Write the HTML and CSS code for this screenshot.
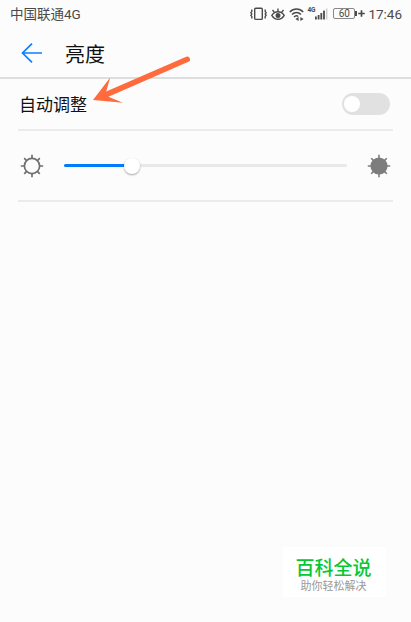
FILE: index.html
```html
<!DOCTYPE html>
<html lang="zh-CN">
<head>
    <meta charset="UTF-8">
    <meta name="viewport" content="width=device-width, initial-scale=1.0">
    <title>亮度</title>
    <link rel="stylesheet" href="styles.css">
</head>
<body>
    <div class="screen">
        <div class="status-bar">
            <span class="carrier">中国联通4G</span>
            <div class="status-icons">
                <svg class="icon-vibrate" width="17" height="14" viewBox="0 0 17 14" fill="none" stroke="#4a4a4a" stroke-width="1.4">
                    <rect x="4.7" y="1.2" width="7.6" height="11.2" rx="1"></rect>
                    <path d="M1.8 2.6v2l-.9 1 .9 1.4-.9 1.4.9 1v2M15.2 2.6v2l.9 1-.9 1.4.9 1.4-.9 1v2"></path>
                </svg>
                <svg class="icon-eye" width="14" height="14" viewBox="0 0 14 14" fill="none" stroke="#4a4a4a" stroke-width="1.4">
                    <path d="M.8 8.3C4 3.6 10 3.6 13.2 8.3C10 13.6 4 13.6 .8 8.3z"></path>
                    <circle cx="7" cy="8.5" r="1.8" fill="#4a4a4a"></circle>
                    <path d="M7 1.5v3.2M1.5 3l1.9 2.4M12.5 3l-1.9 2.4"></path>
                </svg>
                <svg class="icon-wifi" width="15" height="14" viewBox="0 0 15 14" fill="none" stroke="#4a4a4a" stroke-width="1.5">
                    <path d="M.8 5C4.6 1 10.4 1 14.2 5M3 7.6c2.7-2.8 6.3-2.8 9 0M5 10.1c1.4-1.5 3.1-1.5 4.3-.6"></path>
                    <path d="M6.4 12l3.2-2v4zM14.6 12l-3.2-2v4z" fill="#4a4a4a" stroke="none"></path>
                </svg>
                <span class="network">4G</span>
                <svg class="icon-signal" width="13" height="12" viewBox="0 0 13 12" fill="#4a4a4a">
                    <rect x="0" y="8.5" width="1.8" height="3"></rect>
                    <rect x="2.7" y="7" width="1.8" height="4.5"></rect>
                    <rect x="5.4" y="5" width="1.8" height="6.5"></rect>
                    <rect x="8.1" y="2.6" width="1.8" height="8.9"></rect>
                    <rect x="10.9" y="0.5" width="1.6" height="11" fill="#cfcfcf"></rect>
                </svg>
                <span class="battery">60</span>
                <svg class="icon-plus" width="7" height="7" viewBox="0 0 7 7" stroke="#4a4a4a" stroke-width="1.7">
                    <path d="M3.5 .2v6.6M.2 3.5h6.6"></path>
                </svg>
            </div>
            <span class="clock">17:46</span>
        </div>

        <div class="title-bar">
            <svg class="icon-back" width="22" height="20" viewBox="0 0 22 20" fill="none" stroke="#0a7fff" stroke-width="1.7">
                <path d="M11 .6L1.5 10l9.5 9.4M1.5 10H21"></path>
            </svg>
            <h1>亮度</h1>
        </div>

        <div class="settings">
            <div class="row auto-row">
                <span class="label">自动调整</span>
                <span class="switch"><span class="switch-thumb"></span></span>
            </div>
            <div class="row slider-row">
                <svg class="icon-sun" width="24" height="24" viewBox="0 0 24 24" fill="none" stroke="#707070" stroke-width="1.7">
                    <circle cx="12" cy="12" r="7.6"></circle>
                    <path d="M12 .8v3.5M12 19.7v3.5M.8 12h3.5M19.7 12h3.5M4.2 4.2l2.4 2.4M17.4 17.4l2.4 2.4M4.2 19.8l2.4-2.4M17.4 6.6l2.4-2.4"></path>
                </svg>
                <div class="slider">
                    <div class="slider-fill" style="width: 24%"></div>
                    <div class="slider-thumb"></div>
                </div>
                <svg class="icon-sun" width="24" height="24" viewBox="0 0 24 24" fill="#7d7d7d" stroke="#7d7d7d" stroke-width="1.6">
                    <circle cx="12" cy="12" r="7.8"></circle>
                    <path d="M12 .8v3.5M12 19.7v3.5M.8 12h3.5M19.7 12h3.5M4.2 4.2l2.4 2.4M17.4 17.4l2.4 2.4M4.2 19.8l2.4-2.4M17.4 6.6l2.4-2.4"></path>
                </svg>
            </div>
        </div>

        <svg class="pointer" width="100" height="52" viewBox="0 0 100 52" fill="#ff6b3d">
            <path d="M1 45L18.2 22.5L14.2 36.5L94.2 1.8A2.7 2.7 0 0 1 96.4 6.8L16.4 41.8L31 47.8z"></path>
        </svg>

        <div class="badge">
            <div class="badge-title">百科全说</div>
            <div class="badge-text">助你轻松解决</div>
        </div>
    </div>
</body>
</html>
```

FILE: styles.css
```css
:root {
    --background: #fcfcfc;
    --primary: #007dff;
    --line: #ebebeb;
    --status: #4a4a4a;
    --green: #06c832;
}

* {
    margin: 0;
    padding: 0;
    box-sizing: border-box;
}

body {
    font-family: Roboto, "Noto Sans CJK SC", sans-serif;
    background: var(--background);
    color: #111;
}

svg {
    display: block;
    flex-shrink: 0;
}

.screen {
    position: relative;
    height: 622px;
    overflow: hidden;
}

.status-bar {
    display: flex;
    align-items: center;
    height: 27px;
    padding: 0 9px 0 10px;
    color: var(--status);
    white-space: nowrap;
}

.carrier {
    font-size: 13.5px;
    line-height: 20px;
    margin-right: auto;
}

.status-icons {
    display: flex;
    align-items: center;
}

.icon-eye {
    margin-left: 4px;
}

.icon-wifi {
    margin-left: 4px;
}

.network {
    width: 8px;
    margin: 0 0 6px 3px;
    font-size: 6.5px;
    font-weight: 700;
    line-height: 7px;
}

.battery {
    position: relative;
    width: 22px;
    height: 11px;
    margin-left: 5px;
    border: 1px solid #888;
    border-radius: 2px;
    font-size: 10px;
    line-height: 10px;
    text-align: center;
}

.battery::after {
    content: "";
    position: absolute;
    top: 2px;
    right: -3px;
    width: 2px;
    height: 5px;
    background: var(--status);
}

.icon-plus {
    margin-left: 3px;
}

.clock {
    margin-left: 3px;
    padding-top: 1px;
    font-size: 13.5px;
    line-height: 20px;
}

.title-bar {
    display: flex;
    align-items: center;
    height: 52px;
    padding-left: 21px;
    border-bottom: 2px solid #dedede;
}

.title-bar h1 {
    margin-left: 22px;
    padding-top: 5px;
    font-size: 20px;
    font-weight: 400;
    line-height: 28px;
}

.icon-back {
    margin-top: 1px;
}

.settings {
    padding: 0 18px;
}

.row {
    display: flex;
    align-items: center;
    justify-content: space-between;
}

.auto-row {
    height: 52px;
    padding: 0 3px 0 1px;
    border-bottom: 2px solid var(--line);
}

.label {
    padding-top: 2px;
    font-size: 17px;
    line-height: 24px;
}

.switch {
    display: flex;
    align-items: center;
    width: 48px;
    height: 22px;
    padding: 0 2px;
    border-radius: 11px;
    background: #e1e1e1;
}

.switch-thumb {
    width: 16px;
    height: 16px;
    border-radius: 50%;
    background: #fff;
}

.slider-row {
    height: 71px;
    padding: 0 2px;
    border-bottom: 2px solid var(--line);
}

.slider {
    display: flex;
    align-items: center;
    width: 283px;
    height: 3px;
    border-radius: 2px;
    background: #e9e9e9;
}

.slider-fill {
    height: 3px;
    border-radius: 2px;
    background: var(--primary);
}

.slider-thumb {
    flex-shrink: 0;
    width: 16px;
    height: 16px;
    margin-left: -8px;
    border-radius: 50%;
    background: #fff;
    box-shadow: 0 1px 2px rgba(0, 0, 0, 0.35);
}

/* arrow over the auto-adjust row */
.pointer {
    position: absolute;
    left: 92px;
    top: 55px;
}

.badge {
    position: absolute;
    left: 283px;
    top: 547px;
    width: 103px;
    height: 50px;
    padding: 10px 2px 0 0;
    background: #fff;
    text-align: center;
}

.badge-title {
    color: var(--green);
    font-size: 19px;
    font-weight: 500;
    line-height: 24px;
}

.badge-text {
    margin-top: -1px;
    color: #999;
    font-size: 11px;
    line-height: 13px;
}
```
